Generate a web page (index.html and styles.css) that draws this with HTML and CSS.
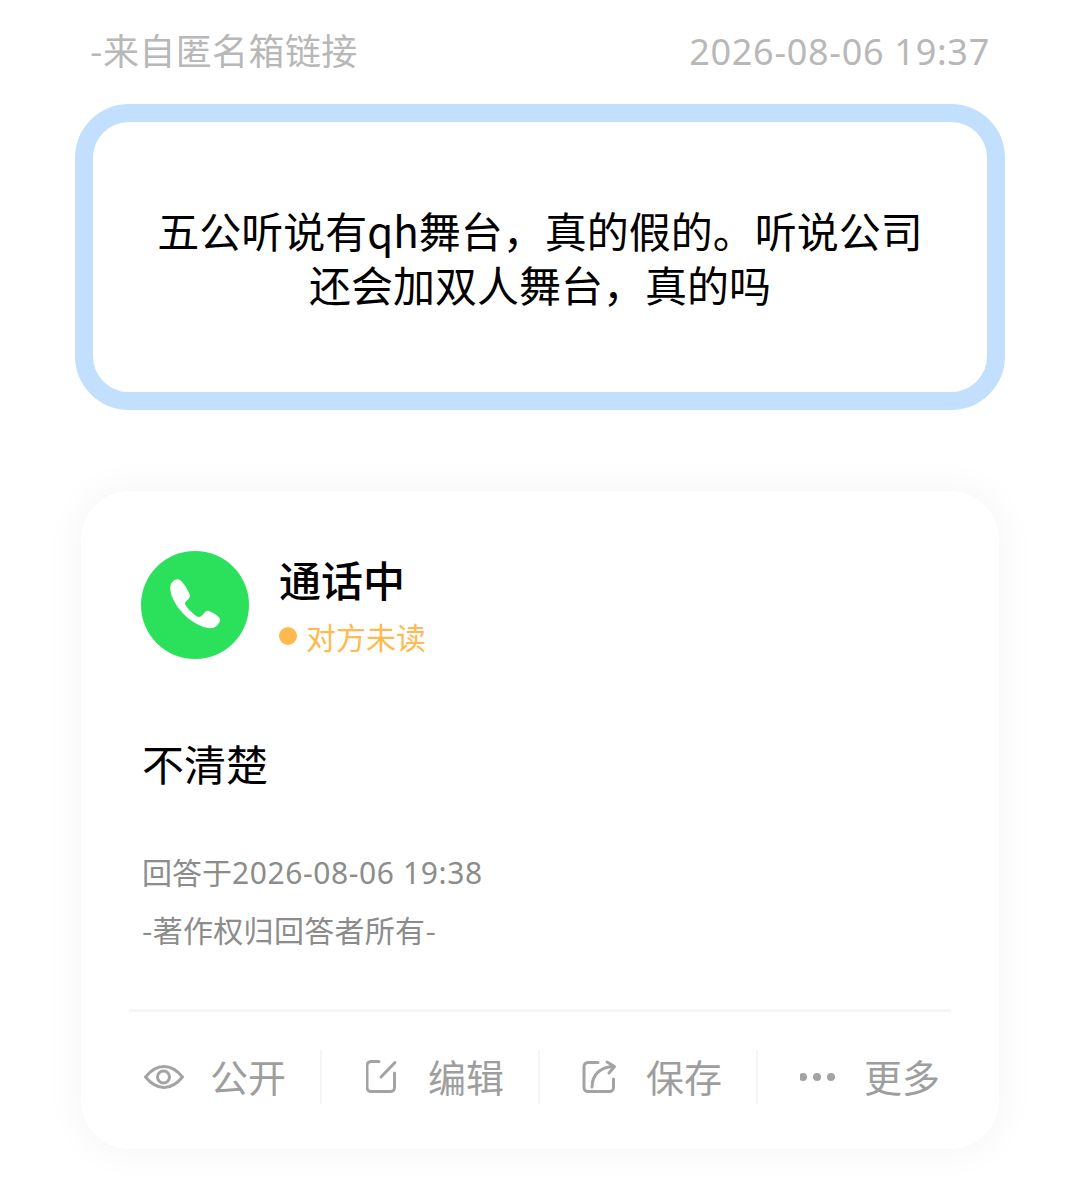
FILE: index.html
```html
<!DOCTYPE html>
<html lang="zh">
<head>
<meta charset="utf-8">
<title>通话中</title>
<link rel="stylesheet" href="styles.css">
</head>
<body>
<div class="page">
  <header class="meta">
    <span class="src">-来自匿名箱链接</span>
    <span class="num">2026-08-06 19:37</span>
  </header>
  <section class="question">
    <p>五公听说有qh舞台，真的假的。听说公司<br>还会加双人舞台，真的吗</p>
  </section>
  <section class="card">
    <div class="who">
      <div class="avatar">
        <svg viewBox="0 0 108 108" width="108" height="108"><path fill="#fff" d="M30 33C32 29 36 27 39 29C42 31 47 39 48.500 43C49.500 46 48 48 46 49.500C44 51 43.500 52.500 44.500 54C47 58 52 63 56 65.500C58 66.500 60 66 61.500 64C63.500 61.500 65.500 59 68 60C72 61.500 77 65 78.500 67C80 69.500 78 73 75 75.500C71.500 78 66 77.500 60 75C48 70 37 59 32 48C29.500 42 28.500 37 30 33z"/></svg>
      </div>
      <div class="who-text">
        <div class="name">通话中</div>
        <div class="status"><i class="dot"></i>对方未读</div>
      </div>
    </div>
    <p class="answer">不清楚</p>
    <p class="small time">回答于<span class="num">2026-08-06 19:38</span></p>
    <p class="small copy">-著作权归回答者所有-</p>
    <div class="rule"></div>
    <nav class="actions">
      <div class="action">
        <svg class="ic-eye" viewBox="0 0 40 26" width="40" height="26"><path d="M1.500 13C8 5 14 2.500 20 2.500S32 5 38.500 13C32 21 26 23.500 20 23.500S8 21 1.500 13z"/><circle cx="19.500" cy="13" r="6"/></svg>
        <span>公开</span>
      </div>
      <div class="action">
        <svg viewBox="1 0 34 36" width="34" height="36"><path d="M14 2.500H6a4 4 0 0 0-4 4V28.500a4 4 0 0 0 4 4H25.500a4 4 0 0 0 4-4V14"/><path d="M16 18L30 3.500"/></svg>
        <span>编辑</span>
      </div>
      <div class="action">
        <svg viewBox="0 0 36 36" width="36" height="36"><path d="M16 3.500H6a4 4 0 0 0-4 4V28.500a4 4 0 0 0 4 4H27.500a4 4 0 0 0 4-4V20"/><path d="M10 28C10 16 18 8 31.500 7.500"/><path d="M25 3l7.500 4.500-5.500 6.500"/></svg>
        <span>保存</span>
      </div>
      <div class="action">
        <svg class="ic-more" viewBox="1 0 36 10" width="36" height="10"><circle cx="4" cy="5" r="4"/><circle cx="18" cy="5" r="4"/><circle cx="32" cy="5" r="4"/></svg>
        <span>更多</span>
      </div>
    </nav>
  </section>
</div>
</body>
</html>
```
FILE: styles.css
```css
* { box-sizing: border-box; }
html, body { margin: 0; padding: 0; background: #fff; }
body {
  width: 1080px;
  height: 1201px;
  overflow: hidden;
  font-family: "Noto Sans CJK SC", "Noto Sans", sans-serif;
}
p { margin: 0; }
.num { font-family: "Noto Sans", "Noto Sans CJK SC", sans-serif; letter-spacing: 0.02em; }
.page { padding-top: 28px; }
.meta {
  display: flex;
  justify-content: space-between;
  padding: 0 90px;
  height: 48px;
  line-height: 48px;
  font-size: 36px;
  color: #b8b8b8;
}
.src { margin-top: -3px; letter-spacing: 0.4px; }
.question {
  margin: 28px 75px 0;
  height: 306px;
  border: 18px solid #c2e0fd;
  border-radius: 54px;
  display: flex;
  align-items: center;
  justify-content: center;
  text-align: center;
  font-size: 42px;
  line-height: 54px;
  color: #000;
}
.card {
  margin: 81px 81px 0;
  height: 658px;
  border-radius: 48px;
  background: #fff;
  box-shadow: 0 0 40px rgba(0, 0, 0, 0.05);
  padding: 60px 48px 0;
}
.who { display: flex; padding-left: 12px; }
.avatar {
  width: 108px;
  height: 108px;
  border-radius: 50%;
  background: #2be05b;
  flex: none;
}
.avatar svg { display: block; }
.who-text { margin: -2px 0 0 30px; }
.name {
  font-size: 42px;
  line-height: 60px;
  color: #000;
  font-weight: 500;
}
.status {
  display: flex;
  align-items: center;
  margin-top: 2px;
  font-size: 30px;
  line-height: 50px;
  color: #ffb94f;
}
.dot {
  width: 18px;
  height: 18px;
  border-radius: 50%;
  background: #ffb94f;
  margin: 0 9px 0 0;
}
.answer {
  margin: 72px 0 0 13px;
  font-size: 42px;
  line-height: 60px;
  color: #000;
}
.small {
  margin-left: 13px;
  font-size: 30px;
  line-height: 44px;
  color: #8c8c8c;
}
.time { margin-top: 56px; }
.copy { margin-top: 12px; letter-spacing: 0.3px; }
.rule { margin-top: 58px; height: 3px; background: #f5f5f5; }
.actions {
  display: flex;
  margin: 38px -26px 0 -25px;
}
.action {
  flex: 0 0 218px;
  height: 54px;
  display: flex;
  align-items: center;
  justify-content: flex-end;
  gap: 28px;
  padding-right: 34px;
  font-size: 38px;
  color: #9e9e9e;
  border-right: 2px solid #f5f5f5;
}
.action span { margin-bottom: 4px; }
.action:last-child { border-right-color: transparent; }
.action svg { flex: none; fill: none; stroke: #a3a3a3; stroke-width: 3; stroke-linecap: round; stroke-linejoin: round; }
.action .ic-eye { margin-right: -2px; }
.action .ic-more { fill: #a3a3a3; stroke: none; }
```
